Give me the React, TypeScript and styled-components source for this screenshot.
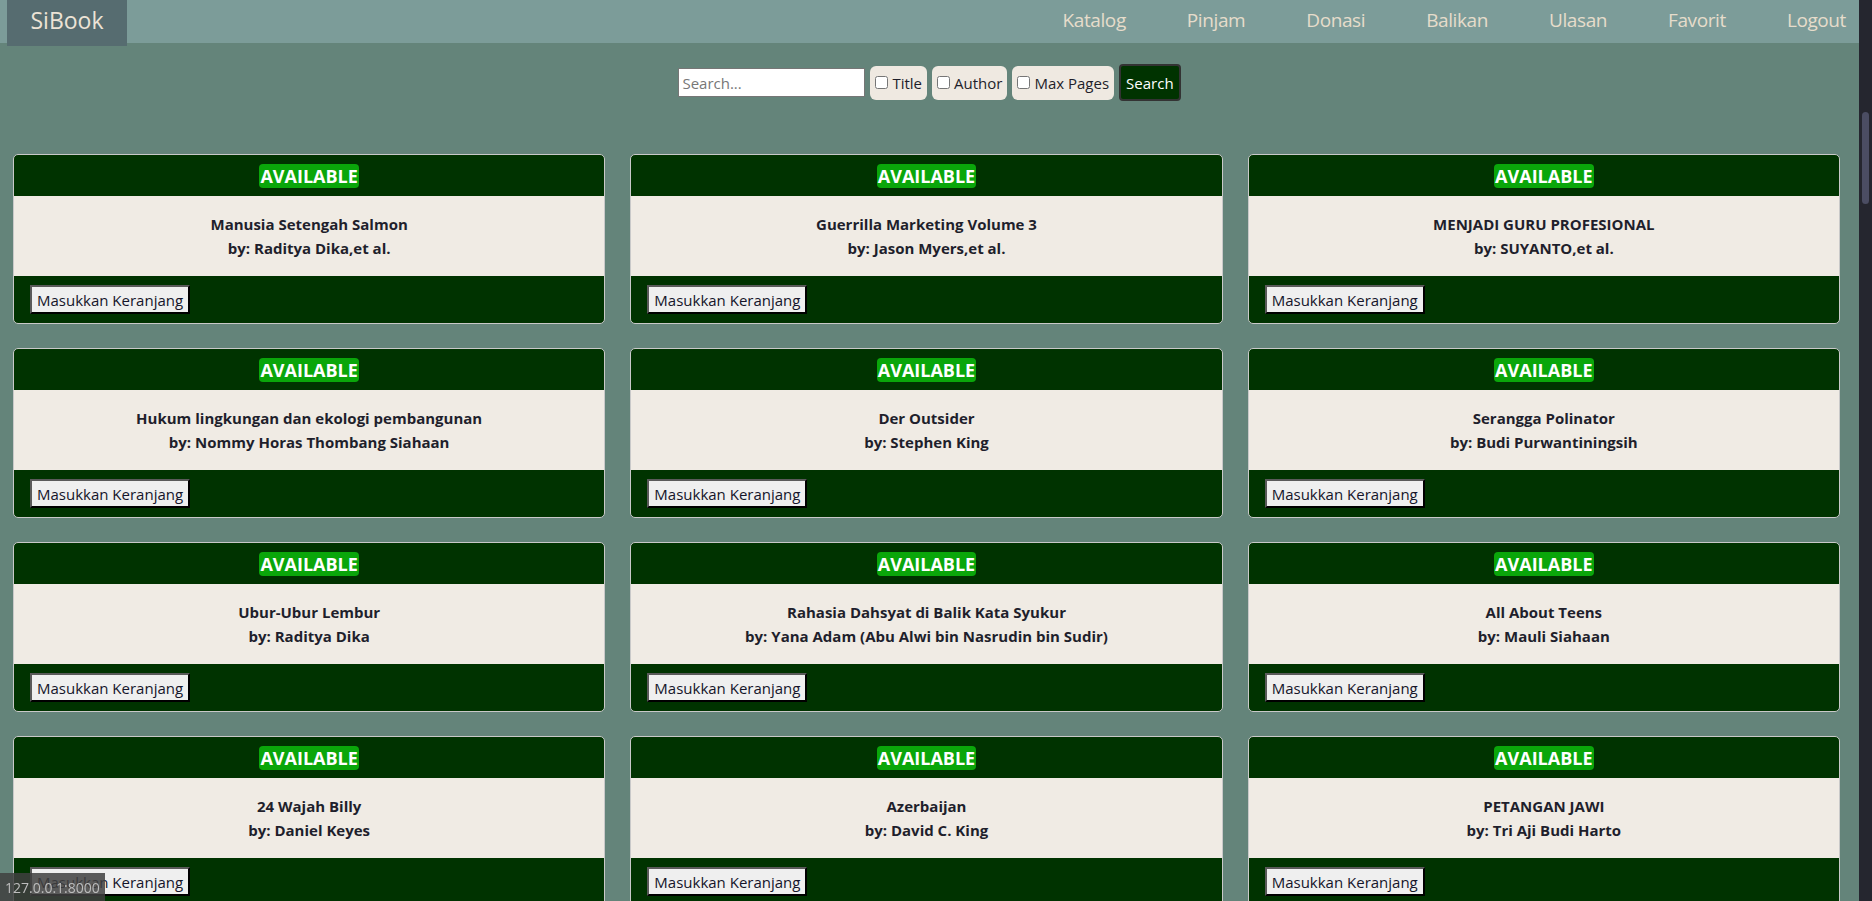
import React from "react";
import styled, { createGlobalStyle } from "styled-components";

const GlobalStyle = createGlobalStyle`
    html, body {
        margin: 0;
        padding: 0;
        height: 100%;
        overflow: hidden;
        font-family: "Open Sans", "Noto Sans", sans-serif;
        background: #64847a;
    }
    #root {
        height: 100%;
    }
`;

interface Book {
    title: string;
    author: string;
}

const books: Book[] = [
    { title: "Manusia Setengah Salmon", author: "Raditya Dika,et al." },
    { title: "Guerrilla Marketing Volume 3", author: "Jason Myers,et al." },
    { title: "MENJADI GURU PROFESIONAL", author: "SUYANTO,et al." },
    { title: "Hukum lingkungan dan ekologi pembangunan", author: "Nommy Horas Thombang Siahaan" },
    { title: "Der Outsider", author: "Stephen King" },
    { title: "Serangga Polinator", author: "Budi Purwantiningsih" },
    { title: "Ubur-Ubur Lembur", author: "Raditya Dika" },
    { title: "Rahasia Dahsyat di Balik Kata Syukur", author: "Yana Adam (Abu Alwi bin Nasrudin bin Sudir)" },
    { title: "All About Teens", author: "Mauli Siahaan" },
    { title: "24 Wajah Billy", author: "Daniel Keyes" },
    { title: "Azerbaijan", author: "David C. King" },
    { title: "PETANGAN JAWI", author: "Tri Aji Budi Harto" },
];

const menu = ["Katalog", "Pinjam", "Donasi", "Balikan", "Ulasan", "Favorit", "Logout"];

export default function App() {
    return (
        <Shell>
            <GlobalStyle />
            <Page>
                <Navbar>
                    <Brand>SiBook</Brand>
                    <NavLinks>
                        {menu.map((m) => (
                            <NavLink key={m} href="#">{m}</NavLink>
                        ))}
                    </NavLinks>
                </Navbar>
                <SearchForm onSubmit={(e) => e.preventDefault()}>
                    <SearchInput type="text" placeholder="Search..." />
                    <FilterLabel><input type="checkbox" />Title</FilterLabel>
                    <FilterLabel><input type="checkbox" />Author</FilterLabel>
                    <FilterLabel><input type="checkbox" />Max Pages</FilterLabel>
                    <SearchButton type="submit">Search</SearchButton>
                </SearchForm>
                <Grid>
                    {books.map((b) => (
                        <Card key={b.title}>
                            <CardHeader>
                                <Badge>AVAILABLE</Badge>
                            </CardHeader>
                            <CardBody>
                                <div>{b.title}</div>
                                <div>by: {b.author}</div>
                            </CardBody>
                            <CardFooter>
                                <CartButton>Masukkan Keranjang</CartButton>
                            </CardFooter>
                        </Card>
                    ))}
                </Grid>
            </Page>
            <ScrollTrack>
                <ScrollThumb />
            </ScrollTrack>
            <StatusTip>127.0.0.1:8000</StatusTip>
        </Shell>
    );
}

const Shell = styled.div`
    display: flex;
    height: 100vh;
    overflow: hidden;
`;

const Page = styled.div`
    flex: 1;
    min-width: 0;
    overflow: hidden;
    background: #64847a;
`;

const Navbar = styled.nav`
    height: 43px;
    background: #7c9c99;
    display: flex;
    align-items: flex-start;
`;

const Brand = styled.div`
    margin-left: 7px;
    width: 120px;
    height: 46px;
    background: #566c70;
    color: #ece3d6;
    font-size: 23px;
    display: flex;
    align-items: center;
    justify-content: center;
    padding-bottom: 6px;
    box-sizing: border-box;
`;

const NavLinks = styled.div`
    margin-left: auto;
    height: 40px;
    display: flex;
    align-items: center;
    gap: 61px;
    padding-right: 13px;
`;

const NavLink = styled.a`
    color: #e6dccb;
    text-decoration: none;
    font-size: 19px;
    font-weight: 400;
    letter-spacing: -0.4px;
`;

const SearchForm = styled.form`
    display: flex;
    justify-content: center;
    align-items: center;
    gap: 5px;
    margin: 21px 0 0;
    height: 37px;
`;

const SearchInput = styled.input`
    width: 187px;
    height: 29px;
    box-sizing: border-box;
    border: 1px solid #767676;
    font-family: inherit;
    font-size: 15px;
    padding: 0 3px;
    &::placeholder {
        color: #777;
    }
`;

const FilterLabel = styled.label`
    height: 34px;
    box-sizing: border-box;
    display: flex;
    align-items: center;
    padding: 0 5px 0 1px;
    background: #efe9e1;
    border-radius: 6px;
    font-size: 15px;
    color: #1e1e2a;
    input {
        width: 13px;
        height: 13px;
        margin: 0 4px;
    }
`;

const SearchButton = styled.button`
    height: 37px;
    background: #003300;
    color: #fff;
    border: 2px solid #333;
    border-radius: 4px;
    font-family: inherit;
    font-size: 15px;
    padding: 0 5px;
`;

const Grid = styled.div`
    display: grid;
    grid-template-columns: repeat(3, 1fr);
    column-gap: 25px;
    row-gap: 24px;
    padding: 53px 19px 0 13px;
`;

const Card = styled.div`
    background: #003300;
    border: 1px solid #c9c9c9;
    border-radius: 5px;
    overflow: hidden;
`;

const CardHeader = styled.div`
    height: 41px;
    display: flex;
    align-items: center;
    justify-content: center;
`;

const Badge = styled.span`
    background: #0aa60a;
    color: #fff;
    font-weight: 700;
    font-size: 18px;
    line-height: 24px;
    border-radius: 4px;
    padding: 0 1px;
    margin-top: 1px;
`;

const CardBody = styled.div`
    height: 80px;
    background: #f0ebe4;
    display: flex;
    flex-direction: column;
    justify-content: center;
    align-items: center;
    text-align: center;
    font-weight: 700;
    font-size: 15px;
    line-height: 24px;
    color: #1f1f2c;
`;

const CardFooter = styled.div`
    height: 47px;
    display: flex;
    align-items: center;
    padding: 0 16px;
`;

const CartButton = styled.button`
    height: 29px;
    background: #efefef;
    border: 2px solid;
    border-color: #5a5a5a #000 #000 #5a5a5a;
    font-family: inherit;
    font-size: 15px;
    color: #15152a;
    padding: 0 5px;
`;

const ScrollTrack = styled.div`
    width: 13px;
    flex-shrink: 0;
    background: #25262f;
    display: flex;
    justify-content: center;
`;

const ScrollThumb = styled.div`
    width: 7px;
    height: 92px;
    margin-top: 112px;
    border-radius: 4px;
    background: #4b4d63;
`;

const StatusTip = styled.div`
    position: fixed;
    left: 0;
    bottom: 0;
    height: 28px;
    padding: 0 5px;
    display: flex;
    align-items: center;
    background: rgba(64, 64, 64, 0.85);
    color: #bdbdbd;
    font-size: 14px;
`;
